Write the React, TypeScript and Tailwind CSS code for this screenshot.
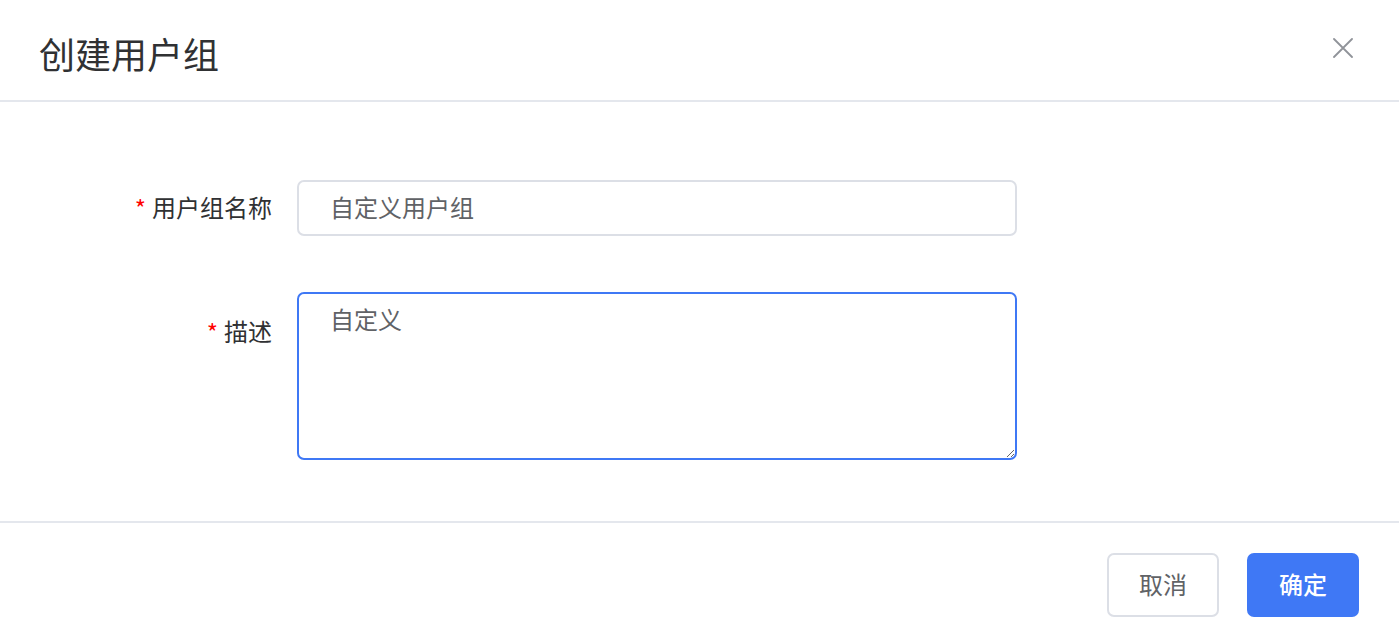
import React from "react";

export default function App() {
  const font = { fontFamily: '"Noto Sans CJK SC", "Noto Sans", sans-serif' };
  return (
    <div className="w-[1399px] h-[637px] bg-white flex flex-col overflow-hidden" style={font}>
      <div className="h-[102px] shrink-0 border-b-2 border-[#e4e7ed] flex items-center justify-between pl-[39px] pr-[46px]">
        <h1 className="text-[36px] leading-none text-[#303133] font-normal mt-[6px]">创建用户组</h1>
        <svg width="20" height="20" viewBox="0 0 20 20" className="text-[#909399] -mt-[4px]">
          <path d="M1 1 L19 19 M19 1 L1 19" stroke="currentColor" strokeWidth="1.8" strokeLinecap="round" fill="none" />
        </svg>
      </div>
      <div className="flex flex-col pt-[78px] pb-[61px] gap-[56px]">
        <div className="flex items-center">
          <div className="w-[272px] shrink-0 flex justify-end items-center text-[24px] text-[#303133] -mt-[3px]">
            <span className="text-[#f00] text-[24px] mr-[6px] mt-[2px]">*</span>
            <span>用户组名称</span>
          </div>
          <div className="ml-[25px] w-[720px] h-[56px] border-2 border-[#dcdfe6] rounded-[7px] flex items-center pl-[31px] pb-[3px] text-[24px] text-[#606266]">
            自定义用户组
          </div>
        </div>
        <div className="flex items-start">
          <div className="w-[272px] shrink-0 flex justify-end items-center text-[24px] leading-[36px] text-[#303133] mt-[20px]">
            <span className="text-[#f00] text-[24px] mr-[6px] mt-[2px]">*</span>
            <span>描述</span>
          </div>
          <textarea
            readOnly
            defaultValue="自定义"
            className="ml-[25px] w-[720px] h-[168px] border-2 border-[#3f78f5] rounded-[7px] pl-[31px] pt-[7px] text-[24px] leading-[36px] text-[#606266] outline-none resize-y"
            style={font}
          />
        </div>
      </div>
      <div className="border-t-2 border-[#e4e7ed] flex justify-end gap-[28px] pt-[30px] pr-[40px]">
        <button className="w-[112px] h-[64px] border-2 border-[#dcdfe6] rounded-[7px] text-[24px] text-[#606266] bg-white pb-[3px]">取消</button>
        <button className="w-[112px] h-[64px] rounded-[7px] text-[24px] text-white font-medium bg-[#3f78f5] pb-[3px]">确定</button>
      </div>
    </div>
  );
}
